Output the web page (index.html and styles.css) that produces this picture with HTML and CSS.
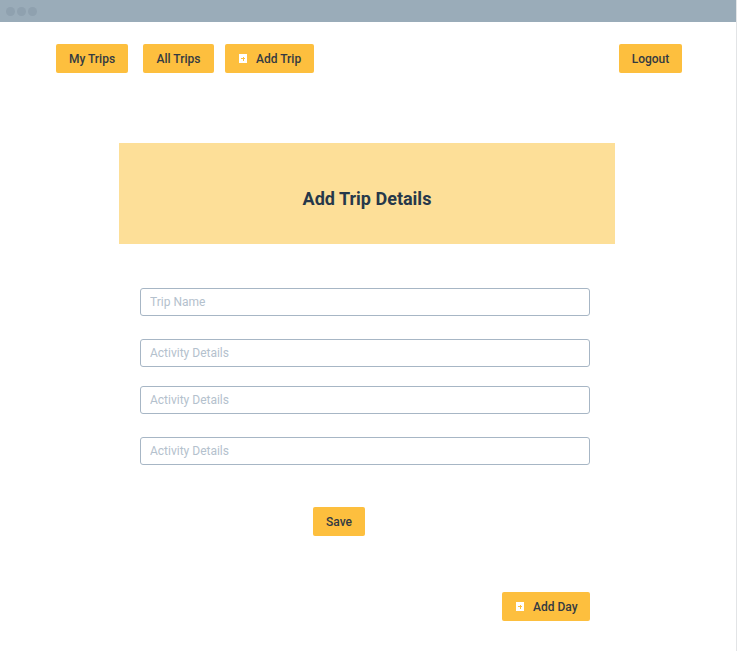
FILE: index.html
```html
<!DOCTYPE html>
<html>
<head>
<meta charset="utf-8">
<link rel="stylesheet" href="styles.css">
</head>
<body>
<div class="frame">
  <div class="chrome">
    <span class="dot"></span><span class="dot"></span><span class="dot"></span>
  </div>
  <nav class="nav">
    <div class="nav-left">
      <button class="btn">My Trips</button>
      <button class="btn">All Trips</button>
      <button class="btn btn-icon"><span class="plus"></span>Add Trip</button>
    </div>
    <button class="btn">Logout</button>
  </nav>
  <header class="banner">
    <h1>Add Trip Details</h1>
  </header>
  <form class="form">
    <input class="field" type="text" placeholder="Trip Name">
    <input class="field f2" type="text" placeholder="Activity Details">
    <input class="field f3" type="text" placeholder="Activity Details">
    <input class="field f4" type="text" placeholder="Activity Details">
    <div class="save-row"><button type="button" class="btn">Save</button></div>
    <div class="day-row"><button type="button" class="btn btn-icon"><span class="plus"></span>Add Day</button></div>
  </form>
</div>
</body>
</html>
```

FILE: styles.css
```css
* { box-sizing: border-box; }
html, body { margin: 0; padding: 0; background: #fff; }
body { font-family: Roboto, "Liberation Sans", sans-serif; color: #2f3640; }
.frame {
  width: 737px;
  height: 651px;
  border-right: 1px solid #e2e4e6;
  background: #fff;
}
.chrome {
  height: 22px;
  background: #9aacb9;
  display: flex;
  align-items: center;
  padding-left: 6px;
  gap: 2px;
}
.dot {
  width: 9px; height: 9px; border-radius: 50%;
  background: #8fa1af;
}
.nav {
  display: flex;
  justify-content: space-between;
  align-items: center;
  padding: 22px 54px 0 56px;
}
.nav-left { display: flex; gap: 0; }
.nav-left .btn:nth-child(1) { width: 72px; justify-content: center; padding: 0; }
.nav-left .btn:nth-child(2) { margin-left: 15px; width: 71px; justify-content: center; padding: 0; }
.nav-left .btn:nth-child(3) { margin-left: 11px; width: 89px; }
.btn {
  font-family: Roboto, "Liberation Sans", sans-serif;
  font-size: 12px;
  font-weight: 500;
  color: #333a42;
  background: #fdbf3e;
  border: none;
  border-radius: 2px;
  height: 29px;
  padding: 0 13px;
  display: inline-flex;
  align-items: center;
  cursor: pointer;
}
.nav > .btn { width: 63px; justify-content: center; padding: 0; }
.btn-icon { padding: 0 0 0 14px; }
.plus {
  width: 8px; height: 9px;
  background: #fff;
  margin-right: 9px;
  position: relative;
}
.plus::before, .plus::after {
  content: "";
  position: absolute;
  background: #fdbf3e;
}
.plus::before { left: 2px; top: 4px; width: 4px; height: 1px; }
.plus::after { left: 3.5px; top: 2.5px; width: 1px; height: 4px; }
.banner {
  margin: 70px 0 0 119px;
  width: 496px;
  height: 101px;
  background: #fddf98;
  display: flex;
  align-items: center;
  justify-content: center;
}
.banner h1 {
  margin: 0;
  font-size: 18px;
  font-weight: 700;
  color: #26384a;
  padding-top: 10px;
}
.form {
  margin: 44px 0 0 140px;
  width: 450px;
  display: flex;
  flex-direction: column;
}
.field {
  height: 28px;
  width: 450px;
  border: 1px solid #a7b6c5;
  border-radius: 3px;
  padding: 0 9px;
  font-family: Roboto, "Liberation Sans", sans-serif;
  font-size: 12px;
  color: #333;
  outline: none;
}
.field::placeholder { color: #b4c1cd; }
.f2 { margin-top: 23px; }
.f3 { margin-top: 19px; }
.f4 { margin-top: 23px; }
.save-row {
  margin-top: 42px;
  padding-left: 173px;
  display: flex;
}
.save-row .btn { width: 52px; justify-content: center; padding: 0; }
.day-row {
  margin-top: 56px;
  display: flex;
  justify-content: flex-end;
}
.day-row .btn { width: 88px; padding-left: 14px; }
```
